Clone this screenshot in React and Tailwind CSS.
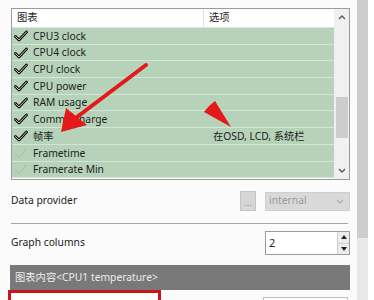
import React from 'react';

const rows = [
  { label: 'CPU3 clock', checked: true },
  { label: 'CPU4 clock', checked: true },
  { label: 'CPU clock', checked: true },
  { label: 'CPU power', checked: true },
  { label: 'RAM usage', checked: true },
  { label: 'Commit charge', checked: true },
  { label: '帧率', checked: true, option: '在OSD, LCD, 系统栏' },
  { label: 'Frametime', checked: false },
  { label: 'Framerate Min', checked: false },
];

const font = { fontFamily: '"Noto Sans", "Noto Sans CJK SC", sans-serif' };

function Check({ on }) {
  return (
    <svg width="14" height="12" viewBox="0 0 14 12" className="shrink-0">
      <path
        d="M1.5 6.5 L5 10 L12.5 2"
        fill="none"
        stroke={on ? '#111' : '#a8c8ab'}
        strokeWidth={on ? 2.8 : 1.6}
        strokeLinecap="round"
        strokeLinejoin="round"
      />
      {on && <path d="M1.5 6.5 L5 10 L12.5 2" fill="none" stroke="#fff" strokeWidth="0.7" strokeLinecap="round" />}
    </svg>
  );
}

function Chevron({ up, color = '#555' }) {
  return (
    <svg width="8" height="5" viewBox="0 0 8 5">
      <path d={up ? 'M1 4 L4 1 L7 4' : 'M1 1 L4 4 L7 1'} fill="none" stroke={color} strokeWidth="1.3" />
    </svg>
  );
}

export default function App() {
  return (
    <div className="relative w-[374px] h-[300px] overflow-hidden bg-[#fbfbfb] flex text-[10.3px] text-[#222]" style={font}>
      {/* settings panel */}
      <div className="w-[357px] shrink-0 pt-[8px] pl-[11px] pr-[7px] flex flex-col">
        {/* list box */}
        <div className="h-[172px] shrink-0 border border-[#9c9c9c] bg-white flex overflow-hidden">
          <div className="flex-1 flex flex-col">
            <div className="h-[19px] shrink-0 flex items-center border-b border-[#e2e2e2] bg-white">
              <div className="w-[192px] pl-[5px] border-r border-[#e2e2e2] h-full flex items-center">图表</div>
              <div className="pl-[5px]">选项</div>
            </div>
            {rows.map((r) => (
              <div key={r.label} className="h-[16.7px] shrink-0 flex items-center bg-[#b6d3b9] border-b border-[#d3e6d5]">
                <div className="w-[21px] pl-[2px] flex items-center">
                  <Check on={r.checked} />
                </div>
                <div className="w-[171px] leading-none">{r.label}</div>
                {r.option && <div className="pl-[9px] leading-none">{r.option}</div>}
              </div>
            ))}
          </div>
          {/* list scrollbar */}
          <div className="w-[15px] shrink-0 bg-[#f0f0f0] flex flex-col items-center">
            <div className="h-[17px] flex items-center"><Chevron up /></div>
            <div className="h-[71px]" />
            <div className="w-[12px] h-[41px] bg-[#cdcdcd]" />
            <div className="flex-1" />
            <div className="h-[17px] flex items-center"><Chevron /></div>
          </div>
        </div>

        {/* data provider */}
        <div className="mt-[11px] h-[20px] shrink-0 flex items-center">
          <div className="flex-1">Data provider</div>
          <div className="w-[16px] h-[20px] shrink-0 bg-[#d6d6d6] border border-[#c4c4c4] flex items-end justify-center text-[9px] text-[#888] leading-[14px]">...</div>
          <div className="ml-[9px] w-[85px] h-[19px] shrink-0 bg-[#d9d9d9] border border-[#cfcfcf] flex items-center justify-between pl-[3px] pr-[5px] text-[#9a9a9a]">
            <span>internal</span>
            <Chevron color="#b0b0b0" />
          </div>
        </div>

        <div className="mt-[12px] h-px shrink-0 bg-[#a5a5a5] mr-[2px]" />

        {/* graph columns */}
        <div className="mt-[7px] h-[24px] shrink-0 flex items-center">
          <div className="flex-1">Graph columns</div>
          <div className="w-[85px] h-[24px] shrink-0 bg-white border border-[#9c9c9c] flex">
            <div className="flex-1 pl-[3px] flex items-center text-[11px]">2</div>
            <div className="w-[12px] flex flex-col border-l border-[#d0d0d0]">
              <div className="flex-1 bg-[#ececec] border-b border-[#d0d0d0] flex items-center justify-center">
                <svg width="6" height="4" viewBox="0 0 6 4"><path d="M0 4 L3 0 L6 4 Z" fill="#222" /></svg>
              </div>
              <div className="flex-1 bg-[#ececec] flex items-center justify-center">
                <svg width="6" height="4" viewBox="0 0 6 4"><path d="M0 0 L3 4 L6 0 Z" fill="#222" /></svg>
              </div>
            </div>
          </div>
        </div>

        {/* graph content header */}
        <div className="mt-[10px] -ml-[1px] h-[25px] shrink-0 bg-[#797979] text-[#ececec] flex items-center pl-[5px]">
          图表内容&lt;CPU1 temperature&gt;
        </div>

        <div className="flex items-start shrink-0">
          <div className="-ml-[3px] w-[153px] h-[30px] shrink-0 border-[3px] border-[#c8161b] bg-white" />
          <div className="ml-[102px] mt-[7px] w-[85px] h-[20px] shrink-0 border border-[#c0c0c0] bg-white" />
        </div>
      </div>

      {/* outer scrollbar */}
      <div className="w-[11px] shrink-0 bg-[#e9e9e9] flex flex-col">
        <div className="h-[238px] bg-[#cdcdcd]" />
      </div>
      <div className="flex-1 bg-white" />

      {/* red annotation arrows */}
      <svg className="absolute inset-0 pointer-events-none" width="374" height="300">
        <line x1="146" y1="65" x2="77" y2="117" stroke="#e3191b" strokeWidth="4" strokeLinecap="round" />
        <polygon points="61,132 66,108 87,125" fill="#e3191b" />
        <polygon points="204,112 209,106 215,101 231,127" fill="#e3191b" />
      </svg>
    </div>
  );
}
